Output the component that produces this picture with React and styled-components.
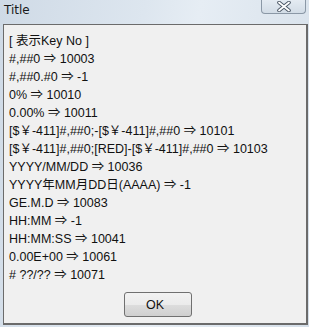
import React from "react";
import styled, { createGlobalStyle } from "styled-components";

const GlobalStyle = createGlobalStyle`
  html, body {
    margin: 0;
    padding: 0;
    background: #d7e1eb;
  }
`;

const Frame = styled.div`
  width: 309px;
  height: 327px;
  box-sizing: border-box;
  display: flex;
  flex-direction: column;
  padding: 0 1px 2px 3px;
  background: linear-gradient(100deg, #cfdae6 0%, #dde6ef 40%, #e6edf4 55%, #d5dfe9 100%);
  font-family: "DejaVu Sans", "Noto Sans CJK JP", sans-serif;
`;

const TitleBar = styled.div`
  height: 24px;
  display: flex;
  justify-content: space-between;
  align-items: flex-start;
  flex-shrink: 0;
`;

const TitleText = styled.span`
  margin: 3px 0 0 1px;
  font-size: 12px;
  color: #1a1a1a;
`;

const CloseButton = styled.div`
  width: 45px;
  height: 14px;
  margin-right: 2px;
  box-sizing: border-box;
  border: 1px solid #8b98a6;
  border-top: none;
  border-radius: 0 0 4px 4px;
  background: linear-gradient(#e4ebf2, #d2dce6);
  display: flex;
  justify-content: center;
  align-items: center;
`;

const Panel = styled.div`
  flex: 1;
  box-sizing: border-box;
  border: 1px solid #6b6b6b;
  border-right-width: 2px;
  border-bottom-width: 2px;
  background: #f0f0f0;
  display: flex;
  flex-direction: column;
  padding: 7px 0 0 5px;
`;

const Line = styled.div`
  height: 18px;
  line-height: 18px;
  font-family: "Liberation Sans", "Noto Sans CJK JP", sans-serif;
  font-size: 12.5px;
  color: #111;
  white-space: nowrap;
`;

const Footer = styled.div`
  display: flex;
  justify-content: center;
  margin-top: auto;
  padding: 0 0 6px 0;
`;

const OkButton = styled.button`
  width: 68px;
  height: 25px;
  padding-left: 1px;
  margin-left: 0;
  box-sizing: border-box;
  border: 1px solid #707070;
  border-radius: 3px;
  background: linear-gradient(#f2f2f2 0%, #ebebeb 50%, #dddddd 51%, #cfcfcf 100%);
  font-family: "Liberation Sans", sans-serif;
  font-size: 12.5px;
  color: #111;
`;

const lines = [
  "[ 表示Key No ]",
  "#,##0 ⇒ 10003",
  "#,##0.#0 ⇒ -1",
  "0% ⇒ 10010",
  "0.00% ⇒ 10011",
  "[$￥-411]#,##0;-[$￥-411]#,##0 ⇒ 10101",
  "[$￥-411]#,##0;[RED]-[$￥-411]#,##0 ⇒ 10103",
  "YYYY/MM/DD ⇒ 10036",
  "YYYY年MM月DD日(AAAA) ⇒ -1",
  "GE.M.D ⇒ 10083",
  "HH:MM ⇒ -1",
  "HH:MM:SS ⇒ 10041",
  "0.00E+00 ⇒ 10061",
  "# ??/?? ⇒ 10071",
];

const CloseIcon = () => (
  <svg width="14" height="11" viewBox="0 0 14 11">
    <path
      d="M2 1.5 L12 9.5 M12 1.5 L2 9.5"
      stroke="#4a5664"
      strokeWidth="3.6"
      strokeLinecap="round"
    />
    <path
      d="M2 1.5 L12 9.5 M12 1.5 L2 9.5"
      stroke="#ffffff"
      strokeWidth="1.8"
      strokeLinecap="round"
    />
  </svg>
);

export default function App() {
  return (
    <>
      <GlobalStyle />
      <Frame>
        <TitleBar>
          <TitleText>Title</TitleText>
          <CloseButton>
            <CloseIcon />
          </CloseButton>
        </TitleBar>
        <Panel>
          {lines.map((text, i) => (
            <Line key={i}>{text}</Line>
          ))}
          <Footer>
            <OkButton>OK</OkButton>
          </Footer>
        </Panel>
      </Frame>
    </>
  );
}
